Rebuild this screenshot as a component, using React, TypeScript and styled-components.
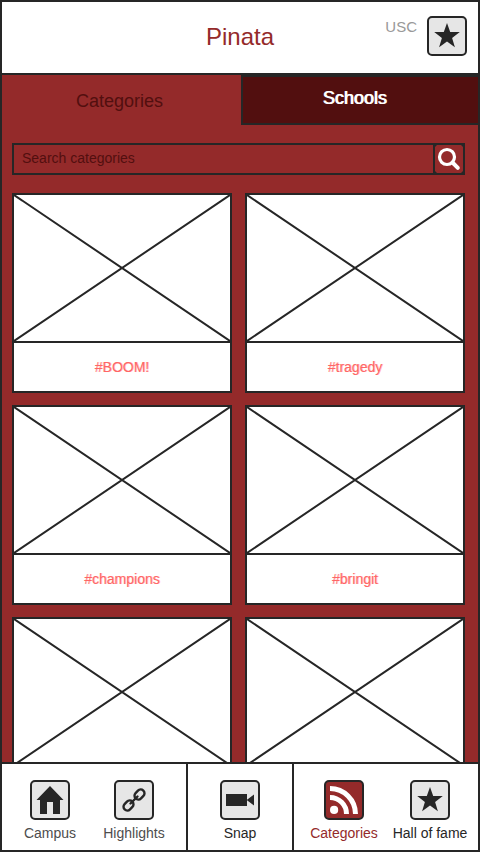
import React from "react";
import styled, { createGlobalStyle, css } from "styled-components";

const ink = "#262626";
const red = "#942a2a";
const maroon = "#520f0f";
const coral = "#ff6666";

const GlobalStyle = createGlobalStyle`
  * { box-sizing: border-box; }
  body { margin: 0; font-family: "Liberation Sans", Arial, sans-serif; color: ${ink}; }
  button, input { font: inherit; color: inherit; margin: 0; }
`;

const Screen = styled.div`
  display: flex;
  flex-direction: column;
  height: 100vh;
  border: 2px solid ${ink};
  background: ${red};
`;

const Header = styled.header`
  display: grid;
  grid-template-columns: 1fr auto 1fr;
  align-items: start;
  padding: 14px 11px 17px;
  border-bottom: 2px solid ${ink};
  background: #fff;
`;

const Title = styled.h1`
  grid-column: 2;
  margin: 0;
  font-size: 24px;
  font-weight: 400;
  line-height: 42px;
  height: 40px;
  color: ${red};
`;

const Account = styled.div`
  display: flex;
  justify-content: flex-end;
  gap: 10px;
  font-size: 15px;
  line-height: 22px;
  color: #999;
`;

const IconTile = styled.span<{ $active?: boolean }>`
  display: block;
  flex: none;
  width: 40px;
  height: 40px;
  border: 2px solid ${ink};
  border-radius: 5px;
  background: ${(p) => (p.$active ? red : "#e6e6e6")};
  color: ${(p) => (p.$active ? "#fff" : ink)};

  svg { display: block; }
`;

const TileButton = styled.button`
  flex: none;
  padding: 0;
  border: 0;
  background: none;
`;

const Tabs = styled.div`
  flex: none;
  display: grid;
  grid-template-columns: calc(50% + 1px) 1fr;
`;

const Tab = styled.button<{ $raised?: boolean }>`
  height: 50px;
  padding: 2px 4px 0 0;
  border: 0;
  background: none;
  font-size: 18px;
  line-height: 20px;
  color: ${maroon};

  ${(p) =>
    p.$raised &&
    css`
      padding: 0 12px 4px 0;
      border: 2px solid ${ink};
      border-right: 0;
      background: ${maroon};
      color: #fff;
      text-shadow: 1px 0 #fff;
    `}
`;

const Content = styled.main`
  flex: 1;
  min-height: 0;
  padding: 18px 13px 0 10px;
  overflow-y: auto;
  scrollbar-width: none;
`;

const SearchForm = styled.form`
  display: flex;
  height: 32px;
  margin-bottom: 18px;
  border: 2px solid ${ink};
`;

const SearchInput = styled.input`
  flex: 1;
  min-width: 0;
  padding: 0 8px 2px;
  border: 0;
  outline: 0;
  background: none;
  font-size: 14px;
  color: ${maroon};

  &::placeholder { color: ${maroon}; opacity: 1; }
`;

const SearchButton = styled.button`
  width: 30px;
  padding: 0;
  border: 0;
  border-left: 2px solid ${ink};
  background: none;

  svg { display: block; }
`;

const CardGrid = styled.div`
  display: grid;
  grid-template-columns: 1fr 1fr;
  gap: 12px 13px;
`;

const Card = styled.a`
  display: block;
  border: 2px solid ${ink};
  background: #fff;
  color: ${coral};
  text-decoration: none;
`;

const Placeholder = styled.svg`
  display: block;
  width: 100%;
  height: 146px;
`;

const Tag = styled.span`
  display: block;
  min-height: 50px;
  border-top: 2px solid ${ink};
  font-size: 14px;
  line-height: 48px;
  text-align: center;
  text-shadow: 1px 0 rgba(255, 102, 102, 0.4);
`;

const BottomNav = styled.nav`
  flex: none;
  display: grid;
  grid-template-columns: 1fr 108px 1fr;
  border-top: 2px solid ${ink};
  background: #fff;
`;

const NavGroup = styled.div<{ $inset: string; $divided?: boolean }>`
  display: flex;
  padding: 16px 0 9px;
  padding-inline: ${(p) => p.$inset};
  ${(p) =>
    p.$divided &&
    css`
      border-left: 2px solid ${ink};
      border-right: 2px solid ${ink};
    `}
`;

const NavItem = styled.a<{ $tone: string }>`
  flex: 1 1 0;
  display: flex;
  flex-direction: column;
  align-items: center;
  gap: 5px;
  font-size: 14px;
  line-height: 16px;
  white-space: nowrap;
  text-decoration: none;
  color: ${(p) => p.$tone};
`;

const StarIcon = () => (
  <svg width="36" height="36" viewBox="0 0 36 36" aria-hidden="true">
    <path fill="currentColor" d="M18 5l3.200 9h9.600l-7.700 5.900 2.800 9.400-7.900-5.700-7.900 5.700 2.800-9.400-7.700-5.900h9.600z" />
  </svg>
);

const HomeIcon = () => (
  <svg width="36" height="36" viewBox="0 0 36 36" aria-hidden="true">
    <path fill="currentColor" d="M18 4L31.500 18H28v14h-7V20h-6v12H8V18H4.500z" />
  </svg>
);

const LinkIcon = () => (
  <svg width="36" height="36" viewBox="0 0 36 36" aria-hidden="true">
    <g fill="none" stroke="currentColor" strokeWidth="2.400">
      <rect x="-5.500" y="-3.800" width="11" height="7.600" rx="3.800" transform="translate(12.500 23.500) rotate(-46)" />
      <rect x="-5.500" y="-3.800" width="11" height="7.600" rx="3.800" transform="translate(23.500 12.500) rotate(-46)" />
      <path strokeLinecap="round" d="M14.500 21.500l7-7" />
    </g>
  </svg>
);

const CameraIcon = () => (
  <svg width="36" height="36" viewBox="0 0 36 36" aria-hidden="true">
    <path fill="currentColor" d="M4 12h21v5.700l7-5.200v11l-7-5.200V24H4z" />
  </svg>
);

const FeedIcon = () => (
  <svg width="36" height="36" viewBox="0 0 36 36" aria-hidden="true">
    <circle cx="8.100" cy="27.900" r="4.100" fill="currentColor" />
    <g fill="none" stroke="currentColor" strokeWidth="5">
      <path d="M4 15.500a16.500 16.500 0 0 1 16.500 16.500" />
      <path d="M4 6.500a25.500 25.500 0 0 1 25.500 25.500" />
    </g>
  </svg>
);

const SearchIcon = () => (
  <svg width="28" height="28" viewBox="0 0 28 28" aria-hidden="true">
    <g fill="none" stroke="#fff">
      <circle cx="12" cy="12" r="7.500" strokeWidth="3.200" />
      <path d="M17.500 17.500L22.800 22.800" strokeWidth="4" strokeLinecap="round" />
    </g>
    <path fill={ink} d="M0 0h2L0 2zM28 0v2l-2-2zM0 28v-2l2 2zM28 28h-2l2-2z" />
  </svg>
);

const cards = [
  { id: "boom", tag: "#BOOM!" },
  { id: "tragedy", tag: "#tragedy" },
  { id: "champions", tag: "#champions" },
  { id: "bringit", tag: "#bringit" },
  { id: "untagged-1", tag: "" },
  { id: "untagged-2", tag: "" },
];

export default function App() {
  return (
    <>
      <GlobalStyle />
      <Screen>
        <Header>
          <Title>Pinata</Title>
          <Account>
            <span>USC</span>
            <TileButton type="button" aria-label="Favorites">
              <IconTile><StarIcon /></IconTile>
            </TileButton>
          </Account>
        </Header>
        <Tabs role="tablist">
          <Tab type="button" role="tab" aria-selected="true">Categories</Tab>
          <Tab type="button" role="tab" aria-selected="false" $raised>Schools</Tab>
        </Tabs>
        <Content>
          <SearchForm role="search" onSubmit={(e) => e.preventDefault()}>
            <SearchInput type="text" aria-label="Search categories" placeholder="Search categories" />
            <SearchButton type="submit" aria-label="Search"><SearchIcon /></SearchButton>
          </SearchForm>
          <CardGrid>
            {cards.map(({ id, tag }) => (
              <Card key={id} href={`#${id}`}>
                <Placeholder viewBox="0 0 216 146" preserveAspectRatio="none" aria-hidden="true">
                  <path d="M0 0L216 146M216 0L0 146" stroke={ink} strokeWidth="2" vectorEffect="non-scaling-stroke" />
                </Placeholder>
                <Tag>{tag}</Tag>
              </Card>
            ))}
          </CardGrid>
        </Content>
        <BottomNav>
          <NavGroup $inset="6px 10px">
            <NavItem href="#campus" $tone="#4d4d4d">
              <IconTile><HomeIcon /></IconTile>
              Campus
            </NavItem>
            <NavItem href="#highlights" $tone="#4d4d4d">
              <IconTile><LinkIcon /></IconTile>
              Highlights
            </NavItem>
          </NavGroup>
          <NavGroup $inset="0" $divided>
            <NavItem href="#snap" $tone={ink}>
              <IconTile><CameraIcon /></IconTile>
              Snap
            </NavItem>
          </NavGroup>
          <NavGroup $inset="7px 5px">
            <NavItem href="#categories" $tone={red} aria-current="page">
              <IconTile $active><FeedIcon /></IconTile>
              Categories
            </NavItem>
            <NavItem href="#hall-of-fame" $tone={ink}>
              <IconTile><StarIcon /></IconTile>
              Hall of fame
            </NavItem>
          </NavGroup>
        </BottomNav>
      </Screen>
    </>
  );
}
